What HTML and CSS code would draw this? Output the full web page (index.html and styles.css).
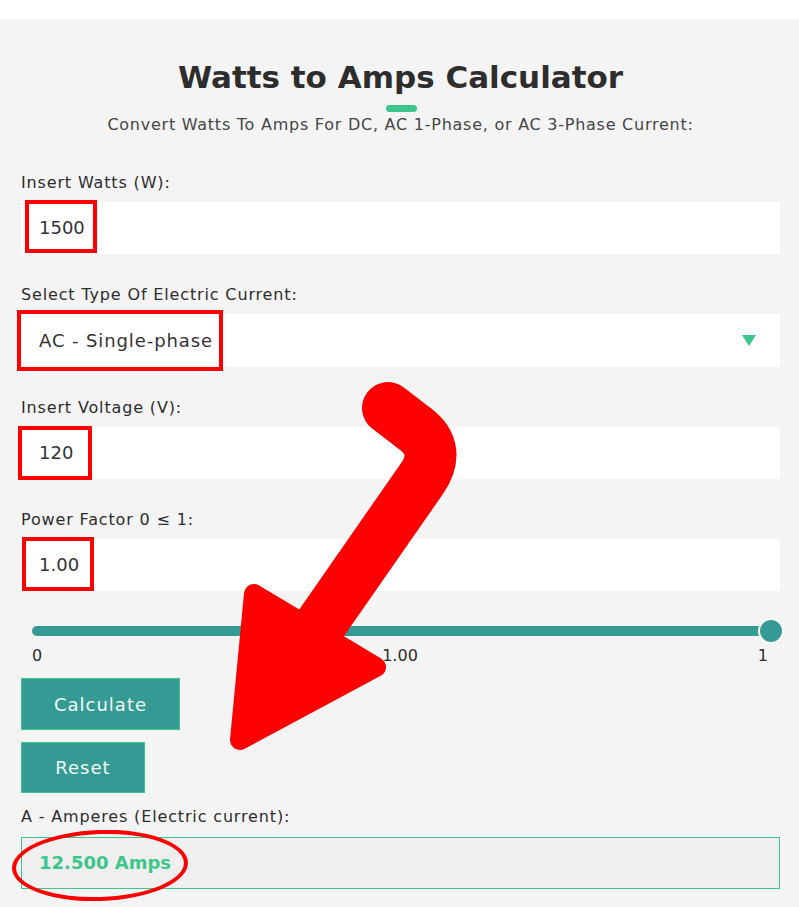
FILE: index.html
```html
<!DOCTYPE html>
<html>
<head>
<meta charset="utf-8">
<link rel="stylesheet" href="styles.css">
</head>
<body>
<div class="page">
  <div class="calc">
    <h1 class="title">Watts to Amps Calculator</h1>
    <div class="accent"></div>
    <p class="subtitle">Convert Watts To Amps For DC, AC 1-Phase, or AC 3-Phase Current:</p>

    <div class="field">
      <label class="label">Insert Watts (W):</label>
      <div class="input">1500<span class="mark mark-1"></span></div>
    </div>

    <div class="field">
      <label class="label">Select Type Of Electric Current:</label>
      <div class="input select"><span class="select-text">AC - Single-phase</span><span class="caret"></span><span class="mark mark-2"></span></div>
    </div>

    <div class="field">
      <label class="label">Insert Voltage (V):</label>
      <div class="input">120<span class="mark mark-3"></span></div>
    </div>

    <div class="field">
      <label class="label">Power Factor 0 ≤ 1:</label>
      <div class="input">1.00<span class="mark mark-4"></span></div>
    </div>

    <div class="slider">
      <div class="track"><span class="thumb"></span></div>
      <div class="scale"><span>0</span><span>1.00</span><span>1</span></div>
    </div>

    <div class="buttons">
      <button class="btn btn-calc">Calculate</button>
      <button class="btn btn-reset">Reset</button>
    </div>

    <div class="result-field">
      <label class="label">A - Amperes (Electric current):</label>
      <div class="result">12.500 Amps<span class="ellipse"></span></div>
    </div>

    <svg class="big-arrow" width="799" height="907" viewBox="0 0 799 907">
      <path d="M388 408 L414 428 Q443 449 421 480 L318 628" fill="none" stroke="#ff0000" stroke-width="52" stroke-linecap="round" stroke-linejoin="round"/>
      <polygon points="254,594 376,667 240,740" fill="#ff0000" stroke="#ff0000" stroke-width="20" stroke-linejoin="round"/>
    </svg>
  </div>
</div>
</body>
</html>
```
FILE: styles.css
```css
* { box-sizing: border-box; }
html, body { margin: 0; padding: 0; background: #ffffff; }
body { font-family: "DejaVu Sans", "Open Sans", sans-serif; color: #333333; }
.page { padding-top: 19px; }
.calc {
  position: relative;
  background: #f4f4f4;
  padding: 38px 19px 20px 21px;
  min-height: 888px;
}
.title {
  margin: 0;
  text-align: center;
  font-size: 31px;
  line-height: 40px;
  font-weight: 700;
  color: #2d2d2d;
}
.accent {
  width: 31px;
  height: 7px;
  border-radius: 4px;
  background: #3cc68a;
  margin: 8px auto 0 365px;
}
.subtitle {
  margin: 2px 0 0 0;
  text-align: center;
  font-size: 16px;
  line-height: 22px;
  font-weight: 400;
  letter-spacing: 0.75px;
  color: #454545;
}
.field { margin-top: 37px; }
.field + .field { margin-top: 31px; }
.label {
  display: block;
  font-size: 16px;
  line-height: 20px;
  letter-spacing: 0.85px;
  margin-bottom: 9px;
  color: #2d2d2d;
}
.input {
  position: relative;
  height: 52px;
  background: #ffffff;
  padding-left: 18px;
  font-size: 18px;
  line-height: 52px;
  color: #333333;
}
.select { height: 53px; line-height: 53px; }
.select-text { letter-spacing: 0.9px; }
.caret {
  position: absolute;
  right: 24px;
  top: 21px;
  width: 0; height: 0;
  border-left: 7px solid transparent;
  border-right: 7px solid transparent;
  border-top: 11px solid #3cc68a;
}
.mark {
  position: absolute;
  border: 4px solid #ff0000;
}
.mark-1 { left: 4px; top: -2px; width: 72px; height: 53px; }
.mark-2 { left: -4px; top: -4px; width: 206px; height: 61px; }
.mark-3 { left: -3px; top: -1px; width: 74px; height: 54px; }
.mark-4 { left: 1px; top: -2px; width: 72px; height: 54px; }

.slider { margin-top: 35px; padding: 0 9px 0 11px; }
.track {
  position: relative;
  height: 10px;
  border-radius: 5px;
  background: #359a94;
}
.thumb {
  position: absolute;
  right: -13px;
  top: -8px;
  width: 26px; height: 26px;
  border-radius: 50%;
  background: #359a94;
  border: 2px solid #ffffff;
}
.scale {
  display: flex;
  justify-content: space-between;
  margin-top: 10px;
  font-size: 16px;
  line-height: 20px;
  color: #2d2d2d;
}
.scale span:last-child { margin-right: 3px; }

.buttons { display: flex; flex-direction: column; align-items: flex-start; gap: 12px; margin-top: 12px; }
.btn {
  font-family: inherit;
  background: #359a94;
  border: 1px solid #3cc68a;
  color: #f2fbf8;
  font-size: 18px;
  letter-spacing: 1px;
  height: 52px;
  padding: 0;
  cursor: pointer;
}
.btn-calc { width: 159px; }
.btn-reset { width: 124px; height: 51px; }

.result-field { margin-top: 14px; }
.result-field .label { margin-bottom: 10px; }
.result {
  position: relative;
  height: 52px;
  background: #efefef;
  border: 1px solid #3cc68a;
  padding-left: 17px;
  font-size: 18px;
  line-height: 50px;
  font-weight: 700;
  color: #3cc68a;
}
.ellipse {
  position: absolute;
  left: -10px; top: -8px;
  width: 176px; height: 71px;
  border: 4px solid #ff0000;
  border-radius: 50%;
  transform: rotate(-2deg);
}
.big-arrow {
  position: absolute;
  left: 0;
  top: -19px;
  pointer-events: none;
}
```
